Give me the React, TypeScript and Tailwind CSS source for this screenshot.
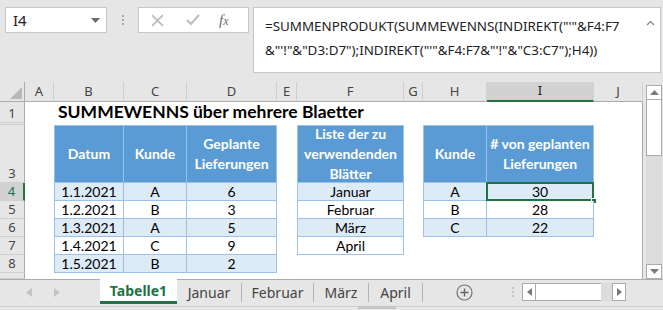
import React from 'react';

const cols = ['A', 'B', 'C', 'D', 'E', 'F', 'G', 'H', 'I', 'J'];

const table1 = [
    ['1.1.2021', 'A', '6'],
    ['1.2.2021', 'B', '3'],
    ['1.3.2021', 'A', '5'],
    ['1.4.2021', 'C', '9'],
    ['1.5.2021', 'B', '2'],
];

const sheets = ['Januar', 'Februar', 'März', 'April'];

const summary = [
    ['A', '30'],
    ['B', '28'],
    ['C', '22'],
];

const colStart: Record<string, string> = {
    A: 'col-start-2', B: 'col-start-3', C: 'col-start-4', D: 'col-start-5', E: 'col-start-6',
    F: 'col-start-7', G: 'col-start-8', H: 'col-start-9', I: 'col-start-10', J: 'col-start-11',
};

const rowStart = ['row-start-1', 'row-start-2', 'row-start-3', 'row-start-4', 'row-start-5', 'row-start-6', 'row-start-7', 'row-start-8', 'row-start-9', 'row-start-10'];

const band = (i: number) => (i % 2 === 0 ? 'bg-[#ddebf7]' : 'bg-white');

const cell = 'flex items-center justify-center border-r border-b border-[#9bc2e6] text-[14px] text-black';
const head = 'flex items-center justify-center text-center whitespace-nowrap border-r border-t border-b border-[#9bc2e6] bg-[#5b9bd5] text-white font-bold text-[14px] leading-[20px]';

const FormulaBar = () => (
    <div className="h-[82px] flex items-start pt-[7px] pl-[5px] font-['Noto_Sans',sans-serif]">
        <div className="w-[102px] h-[26px] bg-white border border-[#c6c6c6] flex items-center justify-between pl-[7px] pr-[6px]">
            <span className="text-[15px] text-[#222] leading-none">I4</span>
            <svg width="9" height="5" viewBox="0 0 9 5"><path d="M0 0h9L4.5 5z" fill="#6b6b6b" /></svg>
        </div>
        <div className="w-[31px] h-[26px] flex flex-col items-center justify-center gap-[2px]">
            <span className="w-[2px] h-[2px] bg-[#a6a6a6]" />
            <span className="w-[2px] h-[2px] bg-[#a6a6a6]" />
            <span className="w-[2px] h-[2px] bg-[#a6a6a6]" />
        </div>
        <div className="w-[111px] h-[26px] bg-white border border-[#c6c6c6] flex items-center pl-[12px]">
            <svg width="13" height="13" viewBox="0 0 12 12" className="mr-[22px]">
                <path d="M1 1l10 10M11 1L1 11" stroke="#bdbdbd" strokeWidth="1.6" />
            </svg>
            <svg width="14" height="12" viewBox="0 0 14 12" className="mr-[19px]">
                <path d="M1 6l4 4 8-9" stroke="#bdbdbd" strokeWidth="2" fill="none" />
            </svg>
            <span className="font-['Liberation_Serif',serif] italic text-[15px] text-[#6b6b6b] leading-none">f<span className="text-[12px]">x</span></span>
        </div>
        <div className="ml-[4px] w-[408px] h-[66px] bg-white border border-[#c6c6c6] relative pl-[11px] pt-[6px] text-[13.4px] leading-[24px] text-[#222] whitespace-nowrap">
            <div>=SUMMENPRODUKT(SUMMEWENNS(INDIREKT("'"&amp;F4:F7</div>
            <div>&amp;"'!"&amp;"D3:D7");INDIREKT("'"&amp;F4:F7&amp;"'!"&amp;"C3:C7");H4))</div>
            <svg width="9" height="6" viewBox="0 0 9 6" className="absolute right-[5px] top-[12px]">
                <path d="M1 5l3.5-3.5L8 5" stroke="#8a8a8a" strokeWidth="1.4" fill="none" />
            </svg>
        </div>
    </div>
);

const Grid = () => (
    <div className="grid w-[643px] grid-cols-[25px_29px_70px_63px_90px_20px_107px_19px_64px_107px_49px] grid-rows-[20px_21px_2px_58px_18px_18px_18px_18px_18px_6px] bg-white border-r border-[#ababab] font-['Lato',sans-serif]">
        {/* corner */}
        <div className="col-start-1 row-start-1 bg-[#e6e6e6] border-r border-b border-[#ababab] flex items-end justify-end p-[2px]">
            <svg width="12" height="12" viewBox="0 0 12 12"><path d="M12 0v12H0z" fill="#b7b7b7" /></svg>
        </div>
        {/* column headers */}
        {cols.map((c) => (
            <div
                key={c}
                className={`${colStart[c]} row-start-1 flex items-center justify-center font-['Noto_Sans',sans-serif] text-[13px] ${c === 'I' ? 'bg-[#d2d2d2] border-b-2 border-b-[#217346] text-[#222]' : 'bg-[#e6e6e6] border-b border-b-[#ababab] text-[#444]'} border-r border-r-[#d0d0d0]`}
            >
                {c}
            </div>
        ))}
        {/* row headers */}
        {['1', '', '3', '4', '5', '6', '7', '8', ''].map((r, i) => (
            <div
                key={i}
                className={`col-start-1 ${rowStart[i + 1]} flex items-end justify-center pb-[1px] font-['Noto_Sans',sans-serif] text-[13px] leading-[16px] border-b border-b-[#d0d0d0] ${r === '4' ? 'bg-[#d2d2d2] text-[#217346] border-r-2 border-r-[#217346]' : 'bg-[#e6e6e6] text-[#444] border-r border-r-[#ababab]'}`}
            >
                {r}
            </div>
        ))}

        {/* title */}
        <div className="col-start-3 col-span-6 row-start-2 flex items-end pl-[4px] pb-[1px] font-bold text-[17.5px] leading-[20px] text-black whitespace-nowrap">
            SUMMEWENNS über mehrere Blaetter
        </div>

        {/* table 1 */}
        <div className={`col-start-3 row-start-4 border-l ${head}`}>Datum</div>
        <div className={`col-start-4 row-start-4 ${head}`}>Kunde</div>
        <div className={`col-start-5 row-start-4 ${head}`}>Geplante<br />Lieferungen</div>
        {table1.map((row, i) => (
            <React.Fragment key={i}>
                <div className={`col-start-3 ${rowStart[i + 4]} border-l ${cell} ${band(i)}`}>{row[0]}</div>
                <div className={`col-start-4 ${rowStart[i + 4]} ${cell} ${band(i)}`}>{row[1]}</div>
                <div className={`col-start-5 ${rowStart[i + 4]} ${cell} ${band(i)}`}>{row[2]}</div>
            </React.Fragment>
        ))}

        {/* sheet list */}
        <div className={`col-start-7 row-start-4 border-l ${head}`}>Liste der zu<br />verwendenden<br />Blätter</div>
        {sheets.map((s, i) => (
            <div key={s} className={`col-start-7 ${rowStart[i + 4]} border-l ${cell} ${band(i)}`}>{s}</div>
        ))}

        {/* summary */}
        <div className={`col-start-9 row-start-4 border-l ${head}`}>Kunde</div>
        <div className={`col-start-10 row-start-4 ${head}`}># von geplanten<br />Lieferungen</div>
        {summary.map((row, i) => (
            <React.Fragment key={i}>
                <div className={`col-start-9 ${rowStart[i + 4]} border-l ${cell} ${band(i)}`}>{row[0]}</div>
                <div className={`col-start-10 ${rowStart[i + 4]} relative ${cell} ${band(i)}`}>
                    {row[1]}
                    {i === 0 && (
                        <>
                            <div className="absolute -left-[1px] -top-[1px] -right-[1px] -bottom-[1px] border-2 border-[#217346]" />
                            <div className="absolute -right-[4px] -bottom-[4px] w-[6px] h-[6px] bg-[#217346] border border-white" />
                        </>
                    )}
                </div>
            </React.Fragment>
        ))}
    </div>
);

const VScroll = () => (
    <div className="w-[20px] h-[197px] bg-[#e6e6e6] flex flex-col items-center pt-[3px] pl-[2px]">
        <div className="w-[16px] h-[15px] bg-white border border-[#ababab] flex items-center justify-center">
            <svg width="9" height="5" viewBox="0 0 9 5"><path d="M0 5h9L4.5 0z" fill="#7a7a7a" /></svg>
        </div>
        <div className="w-[16px] h-[56px] bg-white border border-[#ababab] border-t-0" />
        <div className="w-[16px] flex-1 bg-[#dcdcdc]" />
        <div className="w-[16px] h-[15px] bg-white border border-[#ababab] flex items-center justify-center">
            <svg width="9" height="5" viewBox="0 0 9 5"><path d="M0 0h9L4.5 5z" fill="#7a7a7a" /></svg>
        </div>
    </div>
);

const TabBar = () => (
    <div className="h-[31px] font-['Noto_Sans',sans-serif]">
        <div className="h-[25px] flex items-stretch border-t border-[#ababab]">
            <div className="w-[100px] flex items-center pl-[26px] gap-[22px]">
                <svg width="6" height="9" viewBox="0 0 6 9"><path d="M6 0v9L0 4.5z" fill="#c4c4c4" /></svg>
                <svg width="6" height="9" viewBox="0 0 6 9"><path d="M0 0v9l6-4.5z" fill="#c4c4c4" /></svg>
            </div>
            <div className="w-[77px] -mt-[1px] bg-white border-b-[3px] border-[#217346] flex items-center justify-center text-[14px] font-bold text-[#217346]">
                Tabelle1
            </div>
            {sheets.map((s, i) => (
                <div key={s} className="flex items-center">
                    <div className={`${['w-[64px]', 'w-[71px]', 'w-[54px]', 'w-[53px]'][i]} flex justify-center text-[14px] text-[#444]`}>{s}</div>
                    <div className="w-[1px] h-[19px] bg-[#b4b4b4]" />
                </div>
            ))}
            <div className="w-[82px] flex items-center justify-center">
                <svg width="17" height="17" viewBox="0 0 17 17">
                    <circle cx="8.5" cy="8.5" r="7.5" stroke="#777" strokeWidth="1.2" fill="none" />
                    <path d="M8.5 4.5v8M4.5 8.5h8" stroke="#666" strokeWidth="1.4" />
                </svg>
            </div>
            <div className="w-[16px] flex flex-col items-center justify-center gap-[2px]">
                <span className="w-[2px] h-[2px] bg-[#c4c4c4]" />
                <span className="w-[2px] h-[2px] bg-[#c4c4c4]" />
                <span className="w-[2px] h-[2px] bg-[#c4c4c4]" />
            </div>
            <div className="flex items-center pl-[1px]">
                <div className="w-[104px] h-[18px] flex items-stretch">
                    <div className="w-[14px] bg-white border border-[#ababab] flex items-center justify-center">
                        <svg width="5" height="8" viewBox="0 0 5 8"><path d="M5 0v8L0 4z" fill="#777" /></svg>
                    </div>
                    <div className="w-[65px] bg-white border-y border-[#ababab]" />
                    <div className="w-[11px] bg-[#dcdcdc]" />
                    <div className="w-[14px] bg-white border border-[#ababab] flex items-center justify-center">
                        <svg width="5" height="8" viewBox="0 0 5 8"><path d="M0 0v8l5-4z" fill="#777" /></svg>
                    </div>
                </div>
            </div>
        </div>
        <div className="h-[6px] flex items-start pt-[2px]">
            <div className="w-full h-[1px] bg-[#cfcfcf] flex">
                <div className="ml-[358px] w-[38px] h-[3px] bg-[#c6c6c6]" />
            </div>
        </div>
    </div>
);

export default function App() {
    return (
        <div className="w-[663px] h-[310px] bg-[#e6e6e6] overflow-hidden">
            <FormulaBar />
            <div className="flex">
                <Grid />
                <VScroll />
            </div>
            <TabBar />
        </div>
    );
}
